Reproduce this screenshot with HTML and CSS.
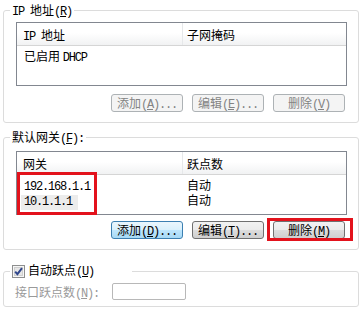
FILE: index.html
```html
<!DOCTYPE html>
<html lang="zh-CN">
  <head>
    <meta charset="UTF-8" />
    <title>高级 TCP/IP 设置</title>
    <link rel="stylesheet" href="styles.css">
  </head>
  <body>
    <div class="page">
      <fieldset class="group">
        <legend><span class="en">IP </span>地址<span class="en">(<u>R</u>)</span></legend>
        <div class="group-body body-ip">
          <div class="list">
            <div class="list-head">
              <div class="col col-1"><span class="en">IP </span>地址</div>
              <div class="col col-2">子网掩码</div>
            </div>
            <div class="list-body">
              <div class="row">
                <div class="col col-1"><span class="cell">已启用 <span class="en">DHCP</span></span></div>
                <div class="col col-2"></div>
              </div>
            </div>
          </div>
          <div class="buttons buttons-ip">
            <button disabled>添加<span class="en">(<u>A</u>)...</span></button>
            <button disabled>编辑<span class="en">(<u>E</u>)...</span></button>
            <button disabled>删除<span class="en">(<u>V</u>)</span></button>
          </div>
        </div>
      </fieldset>

      <fieldset class="group group-gw">
        <legend>默认网关<span class="en">(<u>F</u>):</span></legend>
        <div class="group-body body-gw">
          <div class="list">
            <div class="list-head">
              <div class="col col-1">网关</div>
              <div class="col col-2">跃点数</div>
            </div>
            <div class="list-body">
              <div class="row">
                <div class="col col-1"><span class="cell en">192.168.1.1</span></div>
                <div class="col col-2">自动</div>
              </div>
              <div class="row">
                <div class="col col-1"><span class="cell selected en">10.1.1.1</span></div>
                <div class="col col-2">自动</div>
              </div>
            </div>
            <div class="mark"></div>
          </div>
          <div class="buttons buttons-gw">
            <button class="hot">添加<span class="en">(<u>D</u>)...</span></button>
            <button>编辑<span class="en">(<u>T</u>)...</span></button>
            <button class="flagged">删除<span class="en">(<u>M</u>)</span></button>
          </div>
        </div>
      </fieldset>

      <fieldset class="group group-metric">
        <legend class="check-legend">
          <svg class="checkbox" width="13" height="13" viewBox="0 0 13 13">
            <rect x="0.5" y="0.5" width="12" height="12" fill="#f6f6f6" stroke="#8e8f8f" />
            <rect x="2.5" y="2.5" width="8" height="8" fill="#e6e6e6" stroke="#cfcfcf" />
            <path d="M3.2 6.6 L5.4 9.2 L10 3.2" fill="none" stroke="#30468c" stroke-width="2" />
          </svg>
          <span class="check-text">自动跃点<span class="en">(<u>U</u>)</span></span>
        </legend>
        <div class="group-body body-metric">
          <div class="field">
            <label class="field-label">接口跃点数<span class="en">(<u>N</u>):</span></label>
            <input class="field-input" type="text" disabled />
          </div>
        </div>
      </fieldset>
    </div>
  </body>
</html>
```

FILE: styles.css
```css
* {
  box-sizing: border-box;
}

body {
  margin: 0;
  background: #fff;
  color: #000;
  font-family: "Noto Sans CJK SC", sans-serif;
  font-size: 12px;
}

.en {
  font-family: "Liberation Mono", monospace;
  letter-spacing: -1.2px;
}

.page {
  width: 359px;
  padding: 3px 0 0 3px;
}

.group {
  width: 356px;
  min-width: 0;
  margin: 0;
  padding: 0;
  border: 1px solid #dcdcdc;
  border-radius: 3px;
}

.group-gw {
  margin-top: 7px;
}

.group-metric {
  margin-top: 14px;
}

legend {
  margin-left: 6px;
  padding: 0 2px;
  height: 14px;
  line-height: 14px;
}

.check-legend {
  display: flex;
  align-items: center;
  width: 122px;
}

.check-text {
  margin-left: 3px;
}

.body-ip {
  padding: 5px 11px 10px 12px;
}

.body-gw {
  padding: 7px 11px 10px 12px;
}

.body-metric {
  padding: 5px 11px 6px 11px;
}

.list {
  position: relative;
  height: 64px;
  border: 1px solid #828790;
  background: #fff;
}

.list-head {
  display: flex;
  height: 23px;
  border-bottom: 1px solid #d5d5d5;
  background: linear-gradient(#fff 0%, #fff 45%, #f1f2f3 100%);
}

.list-head .col {
  padding-top: 1px;
  line-height: 22px;
}

.col-1 {
  width: 166px;
}

.list-head .col-1 {
  padding-left: 6px;
  border-right: 1px solid #e6e8ea;
}

.col-2 {
  padding-left: 4px;
}

.list-body {
  padding-top: 2px;
}

.row {
  display: flex;
  height: 15px;
  line-height: 15px;
}

.row .col-1 {
  padding-left: 4px;
}

.cell {
  display: inline-block;
  padding: 0 6px 0 3px;
}

.cell.selected {
  background: #ececec;
}

.mark {
  position: absolute;
  top: 20px;
  left: 0;
  width: 80px;
  height: 43px;
  border: 3px solid #e3121c;
}

.buttons {
  display: flex;
  justify-content: flex-end;
  gap: 9px;
  padding-right: 2px;
}

.buttons-ip {
  margin-top: 8px;
}

.buttons-gw {
  margin-top: 6px;
}

button {
  width: 72px;
  height: 18px;
  padding: 0;
  font-family: inherit;
  font-size: 12px;
  line-height: 16px;
  color: #000;
  border: 1px solid #707070;
  border-radius: 3px;
  background: linear-gradient(#f2f2f2 0%, #ebebeb 50%, #dddddd 50%, #cfcfcf 100%);
}

button:disabled {
  color: #838383;
  border-color: #adb2b5;
  background: #f4f4f4;
}

button.hot {
  border-color: #3c7fb1;
  background: linear-gradient(#eaf6fd 0%, #d9f0fc 50%, #bee6fd 50%, #a7d9f5 100%);
}

.flagged {
  position: relative;
}

.flagged::after {
  content: "";
  position: absolute;
  top: -4px;
  bottom: -3px;
  left: -7px;
  right: -9px;
  border: 3px solid #e3121c;
}

.field {
  display: flex;
  align-items: center;
  height: 17px;
}

.field-label {
  width: 97px;
  color: #9a9a9a;
}

.field-input {
  width: 74px;
  height: 17px;
  border: 1px solid #b8b8b8;
  border-radius: 2px;
  background: #fff;
}
```
